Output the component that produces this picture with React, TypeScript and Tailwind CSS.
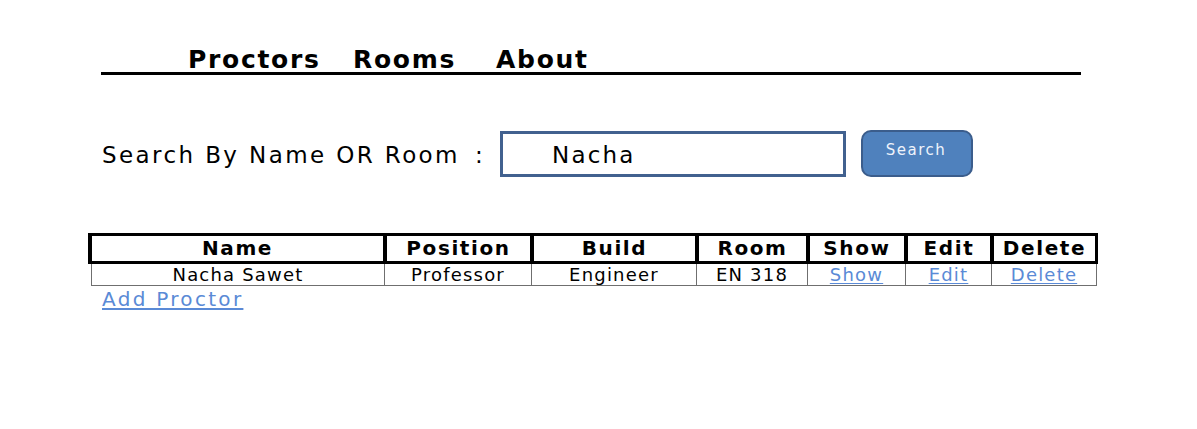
const columns = [
  { label: "Name", head: "w-[291px]", cell: "w-[293px]" },
  { label: "Position", head: "w-[143px]", cell: "w-[147px]" },
  { label: "Build", head: "w-[161px]", cell: "w-[165px]" },
  { label: "Room", head: "w-[107px]", cell: "w-[111px]" },
  { label: "Show", head: "w-[94px]", cell: "w-[98px]" },
  { label: "Edit", head: "w-[82px]", cell: "w-[86px]" },
  { label: "Delete", head: "w-[101px]", cell: "w-[105px]" },
]

const row = [
  { value: "Nacha Sawet" },
  { value: "Professor" },
  { value: "Engineer" },
  { value: "EN 318" },
  { value: "Show", link: true },
  { value: "Edit", link: true },
  { value: "Delete", link: true },
]

const navItems = [
  { label: "Proctors", width: "w-[165px]" },
  { label: "Rooms", width: "w-[143px]" },
  { label: "About", width: "" },
]

export default function App() {
  return (
    <div className="w-[1197px] h-[429px] bg-white text-black font-['DejaVu_Sans',sans-serif] pt-[47px]">
      <nav className="ml-[101px] w-[980px] border-b-[3px] border-black pl-[87px] flex">
        {navItems.map((item) => (
          <a key={item.label} className={`${item.width} text-[25px] leading-[25px] font-bold tracking-[1.7px]`}>
            {item.label}
          </a>
        ))}
      </nav>

      <div className="mt-[55px] ml-[102px] flex items-center">
        <div className="w-[398px] flex text-[23px] pt-[4px]">
          <span className="tracking-[2.4px]">Search By Name OR Room</span>
          <span className="ml-[15px]">:</span>
        </div>
        <div className="w-[346px] h-[46px] border-[3px] border-[#41618f] flex items-center pl-[49px]">
          <span className="text-[23px] tracking-[2.2px] pt-[3px]">Nacha</span>
        </div>
        <button className="ml-[15px] w-[112px] h-[47px] rounded-[10px] border-2 border-[#3b5d8c] bg-[#4f81bd] text-[15px] tracking-[1.5px] text-[#eef3fb] pb-[6px] pr-[2px]">
          Search
        </button>
      </div>

      <div className="mt-[56px] ml-[88px]">
        <div className="flex w-[1010px] bg-black gap-[4px] pl-[4px] pr-[3px] py-[3px]">
          {columns.map((c) => (
            <div
              key={c.label}
              className={`${c.head} h-[25px] bg-white text-center text-[20px] leading-[25px] font-bold tracking-[1.6px]`}
            >
              {c.label}
            </div>
          ))}
        </div>
        <div className="ml-[3px] flex border-l border-b border-[#6f6f6f] w-fit">
          {row.map((r, i) => (
            <div
              key={r.value}
              className={`${columns[i].cell} h-[21px] border-r border-[#6f6f6f] text-center text-[18px] leading-[21px] tracking-[1.2px]`}
            >
              {r.link ? <a className="text-[#5a8ad6] underline underline-offset-2">{r.value}</a> : r.value}
            </div>
          ))}
        </div>
        <a className="block mt-[1px] ml-[14px] w-fit text-[20px] leading-[24px] tracking-[2.3px] text-[#5a8ad6] underline underline-offset-2">
          Add Proctor
        </a>
      </div>
    </div>
  )
}
